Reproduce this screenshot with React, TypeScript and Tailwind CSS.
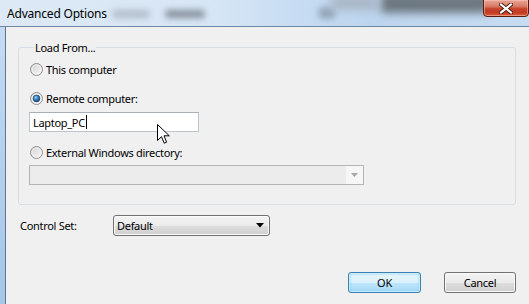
import React from "react";

const font = { fontFamily: '"Noto Sans", "Segoe UI", sans-serif' };

function Radio({ checked = false }: { checked?: boolean }) {
  return (
    <svg width="13" height="13" viewBox="0 0 13 13" className="shrink-0">
      <defs>
        <linearGradient id="rg" x1="0" y1="0" x2="1" y2="1">
          <stop offset="0" stopColor="#cfcfcf" />
          <stop offset="1" stopColor="#fbfbfb" />
        </linearGradient>
        <radialGradient id="dot" cx="0.4" cy="0.35" r="0.7">
          <stop offset="0" stopColor="#9fd6f5" />
          <stop offset="0.5" stopColor="#2d79b8" />
          <stop offset="1" stopColor="#17416a" />
        </radialGradient>
      </defs>
      <circle cx="6.5" cy="6.5" r="6" fill="url(#rg)" stroke="#8f8f8f" strokeWidth="1" />
      <circle cx="6.5" cy="6.5" r="4.5" fill="none" stroke="#f4f4f4" strokeWidth="0.8" />
      {checked && <circle cx="6.5" cy="6.5" r="3.4" fill="url(#dot)" stroke="#1c3f66" strokeWidth="0.6" />}
    </svg>
  );
}

export default function App() {
  return (
    <div
      className="w-[529px] h-[304px] overflow-hidden flex flex-col text-[11px] leading-[15px] text-black bg-[#f0f0f0] tracking-[-0.3px]"
      style={font}
    >
      {/* Title bar */}
      <div className="relative h-[27px] shrink-0 border-b border-[#6f86a0] bg-[linear-gradient(90deg,#dde9f5_0%,#d7e6f5_40%,#c8ddf2_55%,#bcd5ee_70%,#c7dcf1_100%)] overflow-hidden">
        <div className="absolute left-[112px] top-[10px] w-[38px] h-[8px] rounded-full bg-[#b2bdc8] blur-[3px]" />
        <div className="absolute left-[165px] top-[10px] w-[40px] h-[8px] rounded-full bg-[#86919c] blur-[3px]" />
        <div className="absolute left-[318px] top-[7px] w-[18px] h-[12px] rounded-full bg-[#93a6ba] blur-[3px]" />
        <div className="absolute left-[380px] top-[-6px] w-[110px] h-[19px] rounded-[6px] bg-[#6c767f] blur-[4px]" />
        <div className="absolute left-[330px] top-[-4px] w-[50px] h-[14px] rounded-[6px] bg-[#a9b7c6] blur-[4px]" />
        <div className="absolute left-[7px] top-0 h-[26px] flex items-center text-[12px] tracking-[-0.2px]">Advanced Options</div>
        {/* close button */}
        <div className="absolute left-[483px] top-[-1px] w-[46px] h-[18px] rounded-b-[4px] border border-[#5b1a10] bg-[linear-gradient(180deg,#e8a797_0%,#d87a66_40%,#c6432b_55%,#c23b22_80%,#d9663f_100%)] flex items-center justify-center shadow-[inset_0_0_0_1px_rgba(255,200,190,0.5)]">
          <svg width="14" height="11" viewBox="0 0 14 11">
            <path d="M2 1.5 L12 9.5 M12 1.5 L2 9.5" stroke="#4a1810" strokeWidth="4" strokeLinecap="square" />
            <path d="M2 1.5 L12 9.5 M12 1.5 L2 9.5" stroke="#ffffff" strokeWidth="2.2" strokeLinecap="square" />
          </svg>
        </div>
      </div>

      {/* Body */}
      <div className="flex flex-1">
        <div className="w-[5px] shrink-0 bg-[linear-gradient(180deg,#c4dbf2,#b3cfec_50%,#a6c6e8)]" />
        <div className="w-[1px] shrink-0 bg-[#5f7590]" />
        <div className="flex-1 flex flex-col bg-[#f0f0f0] pl-[12px] pr-[13px] pt-[13px]">
          {/* Group box */}
          <fieldset className="border border-[#d5dfe5] rounded-[3px] pl-[10px] pr-[10px] pb-[19px] flex flex-col">
            <legend className="ml-[5px] px-[1px]">Load From...</legend>
            <label className="mt-[7px] h-[15px] flex items-center gap-[3px]">
              <span className="ml-[1px] flex"><Radio /></span>
              <span>This computer</span>
            </label>
            <label className="mt-[14px] h-[15px] flex items-center gap-[3px]">
              <span className="ml-[1px] flex"><Radio checked /></span>
              <span>Remote computer:</span>
            </label>
            <div className="relative mt-[6px] w-[170px] h-[20px] border border-[#bcc4cd] border-t-[#a9b0b9] bg-white flex items-center pl-[3px]">
              <span>Laptop_PC</span>
              <span className="w-[1px] h-[14px] bg-black ml-[1px]" />
              <svg className="absolute left-[127px] top-[11px]" width="14" height="21" viewBox="0 0 14 21">
                <path d="M0.5 0.5 L0.5 16.5 L4.5 12.7 L7.2 19.2 L9.6 18.2 L7 11.8 L12.3 11.8 Z" fill="#ffffff" stroke="#000000" strokeWidth="1" strokeLinejoin="miter" />
              </svg>
            </div>
            <label className="mt-[13px] h-[15px] flex items-center gap-[3px]">
              <span className="ml-[1px] flex"><Radio /></span>
              <span>External Windows directory:</span>
            </label>
            <div className="mt-[5px] w-[335px] h-[20px] border border-[#b5b5b5] bg-[#f0f0f0] flex">
              <div className="flex-1 bg-[#ececec]" />
              <div className="w-[17px] flex items-center justify-center bg-[#f6f6f6]">
                <svg width="7" height="4" viewBox="0 0 7 4"><path d="M0 0 L7 0 L3.5 4 Z" fill="#a7a7a7" /></svg>
              </div>
            </div>
          </fieldset>

          {/* Control set */}
          <div className="mt-[10px] ml-[2px] flex items-center">
            <span className="w-[93px]">Control Set:</span>
            <div className="w-[157px] h-[21px] rounded-[3px] border border-[#707070] bg-[linear-gradient(180deg,#f3f3f3_0%,#ebebeb_50%,#dddddd_51%,#d0d0d0_100%)] shadow-[inset_0_0_0_1px_#fbfbfb] flex items-center pl-[3px] pr-[5px]">
              <span className="flex-1">Default</span>
              <svg width="8" height="5" viewBox="0 0 8 5"><path d="M0 0 L8 0 L4 4.5 Z" fill="#000" /></svg>
            </div>
          </div>

          {/* Buttons */}
          <div className="mt-[36px] flex justify-end gap-[23px]">
            <button className="w-[73px] h-[21px] rounded-[3px] border border-[#3c7fb1] bg-[linear-gradient(180deg,#eaf6fd_0%,#d9f0fc_50%,#bee6fd_51%,#a7d9f5_100%)] shadow-[inset_0_0_0_1px_#c8ecfd,inset_0_0_2px_1px_#6ccdf5] flex items-center justify-center">
              OK
            </button>
            <button className="w-[72px] h-[21px] rounded-[3px] border border-[#707070] bg-[linear-gradient(180deg,#f2f2f2_0%,#ebebeb_50%,#dddddd_51%,#cfcfcf_100%)] shadow-[inset_0_0_0_1px_#fcfcfc] flex items-center justify-center">
              Cancel
            </button>
          </div>
        </div>
      </div>
    </div>
  );
}
